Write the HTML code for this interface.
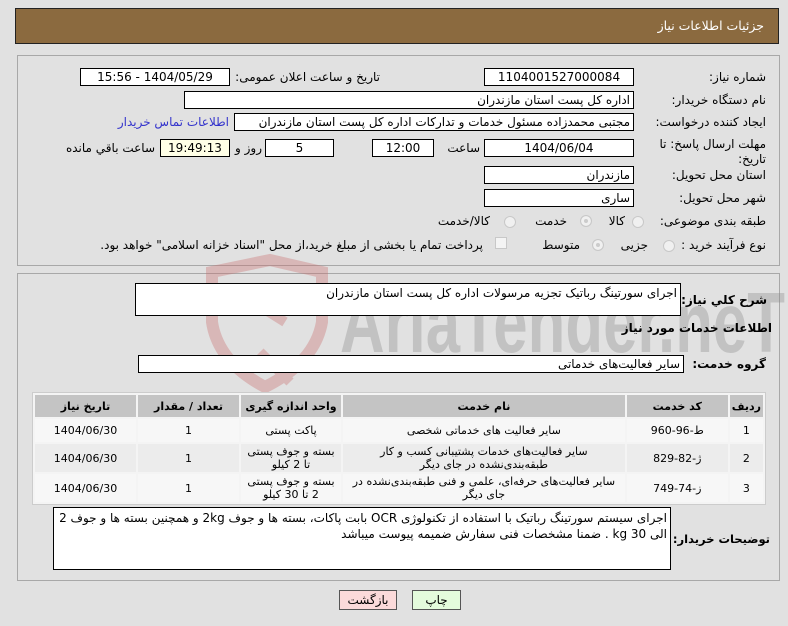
<!DOCTYPE html>
<html><head><meta charset="utf-8"><style>
body{margin:0;width:788px;height:626px;background:#e1e1e1;font-family:"DejaVu Sans","Liberation Sans",sans-serif;font-size:12px;color:#000;position:relative;overflow:hidden}
.a{position:absolute;white-space:nowrap}
.in{position:absolute;background:#fff;border:1px solid #000;box-sizing:border-box;height:18px;line-height:16px;padding:0 3px;direction:rtl;white-space:nowrap;overflow:hidden}
.c{text-align:center}
.l{position:absolute;direction:rtl;text-align:right;white-space:nowrap}
.panel{position:absolute;border:1px solid #a8a8a8;box-sizing:border-box}
.rad{position:absolute;width:12px;height:12px;border-radius:50%;border:1px solid #c8c8c8;background:#f0f0f0;box-sizing:border-box}
table{position:absolute;border-collapse:separate;border-spacing:2px;background:#f4f4f4;border:1px solid #ccc;font-size:11px}
td,th{text-align:center;padding:0 2px;line-height:13px}
th{background:#c4c4c4;font-weight:bold;height:22px}
tr.o td{background:#f7f7f7}
tr.e td{background:#ececec}
</style></head><body>
<div class="a" style="left:15px;top:8px;width:764px;height:36px;background:#8b6a3f;border:1px solid #222;box-sizing:border-box"></div>
<div class="l" style="right:24px;top:18px;color:#fff;font-size:12.5px">جزئیات اطلاعات نیاز</div>

<div class="panel" style="left:17px;top:55px;width:763px;height:211px"></div>
<div class="l" style="right:22px;top:70px">شماره نیاز:</div>
<div class="in c" style="left:484px;top:68px;width:150px">1104001527000084</div>
<div class="l" style="right:408px;top:70px">تاریخ و ساعت اعلان عمومی:</div>
<div class="in c" style="left:80px;top:68px;width:150px">1404/05/29 - 15:56</div>

<div class="l" style="right:22px;top:93px">نام دستگاه خریدار:</div>
<div class="in" style="left:184px;top:91px;width:450px">اداره کل پست استان مازندران</div>

<div class="l" style="right:22px;top:115px">ایجاد کننده درخواست:</div>
<div class="in" style="left:234px;top:113px;width:400px">مجتبی محمدزاده مسئول خدمات و تدارکات اداره کل پست استان مازندران</div>
<div class="l" style="right:559px;top:115px;color:#3333cc">اطلاعات تماس خریدار</div>

<div class="l" style="right:22px;top:137px;line-height:15px">مهلت ارسال پاسخ: تا<br>تاریخ:</div>
<div class="in c" style="left:484px;top:139px;width:150px">1404/06/04</div>
<div class="l" style="right:308px;top:141px">ساعت</div>
<div class="in c" style="left:372px;top:139px;width:62px">12:00</div>
<div class="in c" style="left:265px;top:139px;width:69px">5</div>
<div class="l" style="right:526px;top:141px">روز و</div>
<div class="in c" style="left:160px;top:139px;width:70px;background:#ffffe6">19:49:13</div>
<div class="l" style="right:633px;top:141px">ساعت باقي مانده</div>

<div class="l" style="right:22px;top:168px">استان محل تحویل:</div>
<div class="in" style="left:484px;top:166px;width:150px">مازندران</div>
<div class="l" style="right:22px;top:191px">شهر محل تحویل:</div>
<div class="in" style="left:484px;top:189px;width:150px">ساری</div>

<div class="l" style="right:22px;top:214px">طبقه بندی موضوعی:</div>
<div class="rad" style="left:632px;top:216px"></div><div class="l" style="right:163px;top:214px">کالا</div>
<div class="rad" style="left:580px;top:215px;box-shadow:inset 0 0 0 3px #f0f0f0;background:#ccc"></div><div class="l" style="right:221px;top:214px">خدمت</div>
<div class="rad" style="left:504px;top:216px"></div><div class="l" style="right:298px;top:214px">کالا/خدمت</div>

<div class="l" style="right:22px;top:238px">نوع فرآیند خرید :</div>
<div class="rad" style="left:663px;top:240px"></div><div class="l" style="right:140px;top:238px">جزیی</div>
<div class="rad" style="left:592px;top:239px;box-shadow:inset 0 0 0 3px #f0f0f0;background:#ccc"></div><div class="l" style="right:208px;top:238px">متوسط</div>
<div class="a" style="left:495px;top:237px;width:12px;height:12px;border:1px solid #c8c8c8;background:#f4f4f4;box-sizing:border-box"></div>
<div class="l" style="right:305px;top:238px">پرداخت تمام یا بخشی از مبلغ خرید،از محل "اسناد خزانه اسلامی" خواهد بود.</div>

<div class="panel" style="left:17px;top:273px;width:763px;height:308px"></div>
<svg class="a" style="left:200px;top:252px" width="588" height="145" opacity="0.35">
<path d="M12 20 L70 8 L122 20 L122 70 Q115 110 65 135 Q18 110 12 70Z" fill="none" stroke="#c96b6b" stroke-width="12"/>
<path d="M45 45 L85 70 M60 100 L90 130" stroke="#c96b6b" stroke-width="10"/>
<text x="140" y="100" font-family="Liberation Sans Narrow, Liberation Sans" font-size="85" font-weight="bold" fill="#8a8a8a" textLength="445" lengthAdjust="spacingAndGlyphs">AriaTender.neT</text>
</svg>
<div class="l" style="right:21px;top:293px;font-weight:bold">شرح کلي نیاز:</div>
<div class="in" style="left:135px;top:283px;width:546px;height:33px;line-height:14px;padding-top:2px">اجرای سورتینگ رباتیک تجزیه مرسولات اداره کل پست استان مازندران</div>
<div class="l" style="right:16px;top:321px;font-weight:bold">اطلاعات خدمات مورد نیاز</div>
<div class="l" style="right:22px;top:357px;font-weight:bold">گروه خدمت:</div>
<div class="in" style="left:138px;top:355px;width:546px">سایر فعالیت‌های خدماتی</div>

<table style="left:32px;top:392px;width:734px;direction:rtl">
<tr><th style="width:22px">ردیف</th><th style="width:97px">کد خدمت</th><th>نام خدمت</th><th style="width:96px">واحد اندازه گیری</th><th style="width:97px">تعداد / مقدار</th><th style="width:97px">تاریخ نیاز</th></tr>
<tr class="o" style="height:23px"><td>1</td><td>ط-96-960</td><td>سایر فعالیت های خدماتی شخصی</td><td>پاکت پستی</td><td>1</td><td>1404/06/30</td></tr>
<tr class="e" style="height:28px"><td>2</td><td>ژ-82-829</td><td>سایر فعالیت‌های خدمات پشتیبانی کسب و کار طبقه‌بندی‌نشده در جای دیگر</td><td>بسته و جوف پستی تا 2 کیلو</td><td>1</td><td>1404/06/30</td></tr>
<tr class="o" style="height:28px"><td>3</td><td>ز-74-749</td><td>سایر فعالیت‌های حرفه‌ای، علمی و فنی طبقه‌بندی‌نشده در جای دیگر</td><td>بسته و جوف پستی 2 تا 30 کیلو</td><td>1</td><td>1404/06/30</td></tr>
</table>

<div class="l" style="right:18px;top:532px;font-weight:bold;font-size:11.5px">توضیحات خریدار:</div>
<div class="in" style="left:53px;top:507px;width:618px;height:63px;white-space:normal;line-height:16px;padding-top:2px">اجرای سیستم سورتینگ رباتیک با استفاده از تکنولوژی OCR بابت پاکات، بسته ها و جوف 2kg و همچنین بسته ها و جوف 2 الی 30 kg . ضمنا مشخصات فنی سفارش ضمیمه پیوست میباشد</div>

<div class="a" style="left:339px;top:590px;width:58px;height:20px;background:#fbdada;border:1px solid #555;box-sizing:border-box;text-align:center;line-height:18px">بازگشت</div>
<div class="a" style="left:412px;top:590px;width:49px;height:20px;background:#e4fbdc;border:1px solid #555;box-sizing:border-box;text-align:center;line-height:18px">چاپ</div>
</body></html>
